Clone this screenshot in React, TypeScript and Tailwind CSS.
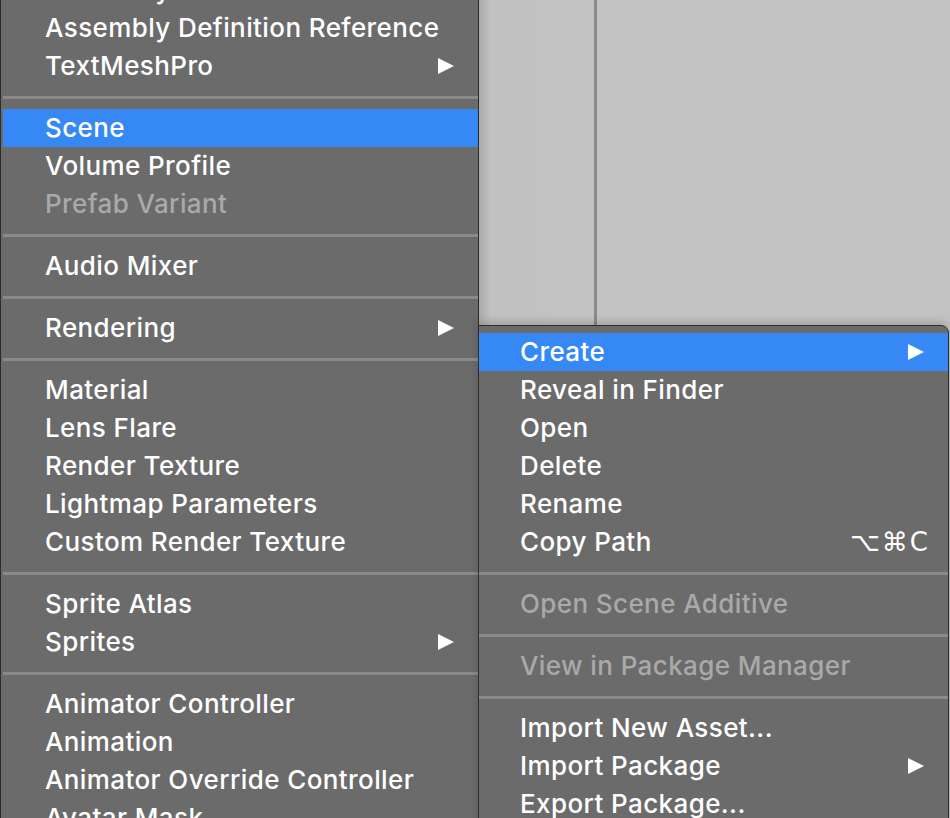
type Item =
  | { kind: "sep" }
  | { kind: "row"; label: string; sub?: boolean; active?: boolean; disabled?: boolean; shortcut?: string };

const leftItems: Item[] = [
  { kind: "row", label: "Assembly Definition" },
  { kind: "row", label: "Assembly Definition Reference" },
  { kind: "row", label: "TextMeshPro", sub: true },
  { kind: "sep" },
  { kind: "row", label: "Scene", active: true },
  { kind: "row", label: "Volume Profile" },
  { kind: "row", label: "Prefab Variant", disabled: true },
  { kind: "sep" },
  { kind: "row", label: "Audio Mixer" },
  { kind: "sep" },
  { kind: "row", label: "Rendering", sub: true },
  { kind: "sep" },
  { kind: "row", label: "Material" },
  { kind: "row", label: "Lens Flare" },
  { kind: "row", label: "Render Texture" },
  { kind: "row", label: "Lightmap Parameters" },
  { kind: "row", label: "Custom Render Texture" },
  { kind: "sep" },
  { kind: "row", label: "Sprite Atlas" },
  { kind: "row", label: "Sprites", sub: true },
  { kind: "sep" },
  { kind: "row", label: "Animator Controller" },
  { kind: "row", label: "Animation" },
  { kind: "row", label: "Animator Override Controller" },
  { kind: "row", label: "Avatar Mask" },
];

const rightItems: Item[] = [
  { kind: "row", label: "Create", sub: true, active: true },
  { kind: "row", label: "Reveal in Finder" },
  { kind: "row", label: "Open" },
  { kind: "row", label: "Delete" },
  { kind: "row", label: "Rename" },
  { kind: "row", label: "Copy Path", shortcut: "⌥⌘C" },
  { kind: "sep" },
  { kind: "row", label: "Open Scene Additive", disabled: true },
  { kind: "sep" },
  { kind: "row", label: "View in Package Manager", disabled: true },
  { kind: "sep" },
  { kind: "row", label: "Import New Asset..." },
  { kind: "row", label: "Import Package", sub: true },
  { kind: "row", label: "Export Package..." },
];

function Arrow() {
  return (
    <svg width="17" height="16" viewBox="0 0 17 16" className="shrink-0">
      <path d="M1 0 L17 8 L1 16 Z" fill="#ffffff" />
    </svg>
  );
}

function MenuList({ items, textPad }: { items: Item[]; textPad: string }) {
  return (
    <>
      {items.map((item, i) =>
        item.kind === "sep" ? (
          <div key={i} className="flex h-[24px] items-center">
            <div className="h-[3px] w-full bg-[#8a8a8a]" />
          </div>
        ) : (
          <div
            key={i}
            className={
              "flex h-[38px] items-center justify-between pr-[24px] " +
              textPad +
              (item.active ? " bg-[#3689f5]" : "")
            }
          >
            <span className={item.disabled ? "text-[#a9a9a9]" : "text-white"}>{item.label}</span>
            {item.sub && <Arrow />}
            {item.shortcut && (
              <span className="-mr-[6px] font-['DejaVu_Sans',sans-serif] font-normal tracking-[2px] text-white">
                {item.shortcut}
              </span>
            )}
          </div>
        )
      )}
    </>
  );
}

export default function App() {
  return (
    <div className="relative flex h-[818px] w-[950px] overflow-hidden bg-[#c3c3c3] font-['Inter',sans-serif] text-[26px] font-medium leading-none tracking-[0.4px]">
      <div className="w-[479px] shrink-0 border-x border-[#2b2b2b] bg-[#6b6b6b] pl-[2px]">
        <div className="-mt-[29px]">
          <MenuList items={leftItems} textPad="pl-[42px]" />
        </div>
      </div>
      <div className="flex flex-1">
        <div className="w-[115px] bg-gradient-to-r from-[#a9a9a9] via-[#c1c1c1] via-[10%] to-[#c3c3c3]" />
        <div className="w-[3px] bg-[#8b8b8b]" />
        <div className="flex-1" />
      </div>

      <div className="absolute left-[478px] top-[325px] w-[471px] rounded-tr-[8px] border border-[#2e2e2e] bg-[#6b6b6b] pt-[7px] shadow-[0_-3px_8px_rgba(0,0,0,0.18)]">
        <MenuList items={rightItems} textPad="pl-[41px]" />
      </div>
    </div>
  );
}
